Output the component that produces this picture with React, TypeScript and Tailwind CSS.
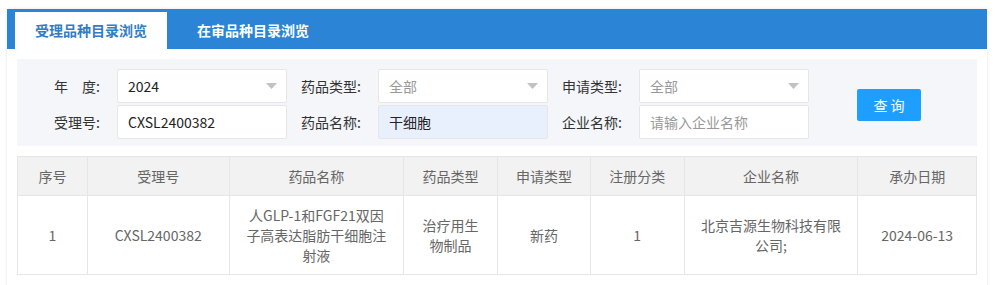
import React from "react";

const font = { fontFamily: '"Noto Sans CJK SC", "Noto Sans", sans-serif' };

function Caret() {
  return (
    <svg width="11" height="6" viewBox="0 0 11 6" className="shrink-0">
      <path d="M0 0 L11 0 L5.5 6 Z" fill="#c2c2c2" />
    </svg>
  );
}

function Field({
  label,
  value,
  placeholder,
  select,
  filled,
  labelW,
}: {
  label: React.ReactNode;
  value?: string;
  placeholder?: string;
  select?: boolean;
  filled?: boolean;
  labelW: string;
}) {
  return (
    <div className="flex items-center">
      <div className={`${labelW} pr-[17px] text-right text-[14px] text-[#333] whitespace-nowrap`}>{label}</div>
      <div
        className={`w-[170px] h-[34px] border border-[#e6e6e6] rounded-[2px] flex items-center justify-between pl-[10px] pr-[9px] text-[14px] ${
          filled ? "bg-[#e8f0fe]" : "bg-white"
        }`}
      >
        {value ? (
          <span className="text-[#222]">{value}</span>
        ) : (
          <span className="text-[#999]">{placeholder}</span>
        )}
        {select && <Caret />}
      </div>
    </div>
  );
}

const cols = [
  { title: "序号", w: "w-[70px]" },
  { title: "受理号", w: "w-[142px]" },
  { title: "药品名称", w: "w-[175px]" },
  { title: "药品类型", w: "w-[94px]" },
  { title: "申请类型", w: "w-[93px]" },
  { title: "注册分类", w: "w-[94px]" },
  { title: "企业名称", w: "w-[174px]" },
  { title: "承办日期", w: "w-[118px]" },
];

const row: React.ReactNode[] = [
  "1",
  "CXSL2400382",
  <>
    人GLP-1和FGF21双因
    <br />
    子高表达脂肪干细胞注
    <br />
    射液
  </>,
  <>
    治疗用生
    <br />
    物制品
  </>,
  "新药",
  "1",
  <>
    北京吉源生物科技有限
    <br />
    公司;
  </>,
  "2024-06-13",
];

export default function App() {
  return (
    <div className="w-[995px] h-[285px] bg-white overflow-hidden pt-[9px] px-[7px]" style={font}>
      <div className="w-[980px] h-[290px] bg-white shadow-[0_0_3px_rgba(0,0,0,0.12)]">
        {/* tabs */}
        <div className="h-[40px] bg-[#2b84d5] flex items-end pl-[8px]">
          <div className="w-[152px] h-[37px] bg-white flex items-center justify-center text-[14px] font-bold text-[#2f7dc6] pb-[1px]">
            受理品种目录浏览
          </div>
          <div className="ml-[30px] h-[37px] flex items-center text-[14px] font-bold text-white pb-[1px]">
            在审品种目录浏览
          </div>
        </div>

        <div className="px-[10px] pt-[10px]">
          {/* filters */}
          <div className="bg-[#f4f6f9] h-[87px] pt-[10px] flex">
            <div className="flex flex-col gap-[2px]">
              <div className="flex">
                <Field labelW="w-[100px]" label={<>年&emsp;度:</>} value="2024" select />
                <Field labelW="w-[91px]" label="药品类型:" placeholder="全部" select />
                <Field labelW="w-[91px]" label="申请类型:" placeholder="全部" select />
              </div>
              <div className="flex">
                <Field labelW="w-[100px]" label="受理号:" value="CXSL2400382" />
                <Field labelW="w-[91px]" label="药品名称:" value="干细胞" filled />
                <Field labelW="w-[91px]" label="企业名称:" placeholder="请输入企业名称" />
              </div>
            </div>
            <div className="ml-[48px] mt-[20px]">
              <button className="w-[64px] h-[32px] bg-[#1e9fff] rounded-[2px] text-white text-[14px] tracking-[3px] pl-[3px]">
                查询
              </button>
            </div>
          </div>

          {/* table */}
          <div className="mt-[10px] border border-[#e6e6e6]">
            <div className="flex bg-[#f2f2f2] border-b border-[#e6e6e6]">
              {cols.map((c, i) => (
                <div
                  key={c.title}
                  className={`${c.w} h-[38px] flex items-center justify-center text-[14px] text-[#666] ${
                    i < cols.length - 1 ? "border-r border-[#e6e6e6]" : ""
                  }`}
                >
                  {c.title}
                </div>
              ))}
            </div>
            <div className="flex">
              {cols.map((c, i) => (
                <div
                  key={c.title}
                  className={`${c.w} h-[78px] flex items-center justify-center text-center text-[14px] leading-[20px] text-[#666] whitespace-nowrap ${
                    i < cols.length - 1 ? "border-r border-[#e6e6e6]" : ""
                  }`}
                >
                  <div>{row[i]}</div>
                </div>
              ))}
            </div>
          </div>
        </div>
      </div>
    </div>
  );
}
